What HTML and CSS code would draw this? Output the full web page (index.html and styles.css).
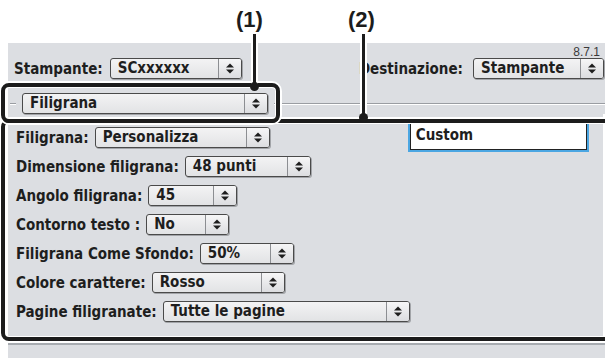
FILE: index.html
```html
<!DOCTYPE html>
<html lang="it">
<head>
    <meta charset="UTF-8">
    <meta name="viewport" content="width=device-width, initial-scale=1.0">
    <title>Filigrana</title>
    <link rel="stylesheet" href="styles.css">
</head>
<body>
    <div class="dialog">
        <div class="version">8.7.1</div>

        <!-- printer / destination -->
        <div class="top-row">
            <span class="label">Stampante:</span>
            <div class="popup pop-printer">
                <span class="popup-text">SCxxxxxx</span>
                <span class="popup-arrows"><svg width="8" height="11" viewBox="0 0 8 11"><polygon points="0,4.5 4,0.5 8,4.5"/><polygon points="0,6.5 8,6.5 4,10.5"/></svg></span>
            </div>
            <span class="label dest-label">Destinazione:</span>
            <div class="popup pop-dest">
                <span class="popup-text">Stampante</span>
                <span class="popup-arrows"><svg width="8" height="11" viewBox="0 0 8 11"><polygon points="0,4.5 4,0.5 8,4.5"/><polygon points="0,6.5 8,6.5 4,10.5"/></svg></span>
            </div>
        </div>

        <!-- panel selector -->
        <div class="section-head">
            <span class="rule rule-short"></span>
            <div class="popup pop-section">
                <span class="popup-text">Filigrana</span>
                <span class="popup-arrows"><svg width="8" height="11" viewBox="0 0 8 11"><polygon points="0,4.5 4,0.5 8,4.5"/><polygon points="0,6.5 8,6.5 4,10.5"/></svg></span>
            </div>
            <span class="rule rule-long"></span>
        </div>

        <div class="pane">
            <div class="fields">
                <div class="field-row">
                    <span class="label">Filigrana:</span>
                    <div class="popup pop-type">
                        <span class="popup-text">Personalizza</span>
                        <span class="popup-arrows"><svg width="8" height="11" viewBox="0 0 8 11"><polygon points="0,4.5 4,0.5 8,4.5"/><polygon points="0,6.5 8,6.5 4,10.5"/></svg></span>
                    </div>
                </div>
                <div class="field-row">
                    <span class="label">Dimensione filigrana:</span>
                    <div class="popup pop-size">
                        <span class="popup-text">48 punti</span>
                        <span class="popup-arrows"><svg width="8" height="11" viewBox="0 0 8 11"><polygon points="0,4.5 4,0.5 8,4.5"/><polygon points="0,6.5 8,6.5 4,10.5"/></svg></span>
                    </div>
                </div>
                <div class="field-row">
                    <span class="label">Angolo filigrana:</span>
                    <div class="popup pop-angle">
                        <span class="popup-text">45</span>
                        <span class="popup-arrows"><svg width="8" height="11" viewBox="0 0 8 11"><polygon points="0,4.5 4,0.5 8,4.5"/><polygon points="0,6.5 8,6.5 4,10.5"/></svg></span>
                    </div>
                </div>
                <div class="field-row">
                    <span class="label">Contorno testo :</span>
                    <div class="popup pop-outline">
                        <span class="popup-text">No</span>
                        <span class="popup-arrows"><svg width="8" height="11" viewBox="0 0 8 11"><polygon points="0,4.5 4,0.5 8,4.5"/><polygon points="0,6.5 8,6.5 4,10.5"/></svg></span>
                    </div>
                </div>
                <div class="field-row">
                    <span class="label">Filigrana Come Sfondo:</span>
                    <div class="popup pop-bg">
                        <span class="popup-text">50%</span>
                        <span class="popup-arrows"><svg width="8" height="11" viewBox="0 0 8 11"><polygon points="0,4.5 4,0.5 8,4.5"/><polygon points="0,6.5 8,6.5 4,10.5"/></svg></span>
                    </div>
                </div>
                <div class="field-row">
                    <span class="label">Colore carattere:</span>
                    <div class="popup pop-color">
                        <span class="popup-text">Rosso</span>
                        <span class="popup-arrows"><svg width="8" height="11" viewBox="0 0 8 11"><polygon points="0,4.5 4,0.5 8,4.5"/><polygon points="0,6.5 8,6.5 4,10.5"/></svg></span>
                    </div>
                </div>
                <div class="field-row">
                    <span class="label">Pagine filigranate:</span>
                    <div class="popup pop-pages">
                        <span class="popup-text">Tutte le pagine</span>
                        <span class="popup-arrows"><svg width="8" height="11" viewBox="0 0 8 11"><polygon points="0,4.5 4,0.5 8,4.5"/><polygon points="0,6.5 8,6.5 4,10.5"/></svg></span>
                    </div>
                </div>
            </div>
            <div class="text-box">Custom</div>
        </div>

        <div class="bottom-rule"></div>
    </div>

    <!-- manual callouts drawn over the dialog -->
    <div class="highlight highlight-2"></div>
    <div class="highlight highlight-1"></div>
    <span class="callout-label callout-label-1">(1)</span>
    <span class="callout-label callout-label-2">(2)</span>
    <span class="callout-line callout-line-1"></span>
    <span class="callout-line callout-line-2"></span>
    <span class="callout-dot callout-dot-1"></span>
    <span class="callout-dot callout-dot-2"></span>
</body>
</html>
```

FILE: styles.css
```css
body {
    margin: 0;
    padding: 0;
    width: 605px;
    height: 358px;
    position: relative;
    overflow: hidden;
    background-color: #fff;
    color: #1e1e1e;
    font-family: "DejaVu Sans Condensed", "DejaVu Sans", sans-serif;
    font-stretch: condensed;
    font-weight: bold;
    font-size: 15px;
}

.dialog {
    margin: 43px 0 0 8px;
    height: 315px;
    background-color: #dcdee2;
    display: flex;
    flex-direction: column;
}

.version {
    height: 12px;
    line-height: 12px;
    padding: 3px 5px 0 0;
    text-align: right;
    font-family: "Liberation Sans", Arial, sans-serif;
    font-stretch: normal;
    font-weight: normal;
    font-size: 12px;
    color: #3a3a3a;
}

.label {
    white-space: nowrap;
}

.top-row {
    display: flex;
    align-items: center;
    height: 21px;
    padding: 0 1px 0 6px;
}

.dest-label {
    margin-left: auto;
    margin-right: 3px;
}

/* popup menus */
.popup {
    display: flex;
    height: 21px;
    box-sizing: border-box;
    margin-left: 7px;
    border: 1px solid #4a4a4a;
    border-radius: 3px;
    background: linear-gradient(#f3f3f4, #e2e3e5);
    box-shadow: 1px 1px 0 #a2a4a8;
}

.popup-text {
    flex: 1;
    padding-left: 7px;
    line-height: 19px;
    white-space: nowrap;
    overflow: hidden;
}

.popup-arrows {
    width: 22px;
    display: flex;
    align-items: center;
    justify-content: center;
    border-left: 1px solid #8c8e92;
    border-radius: 0 2px 2px 0;
    background: linear-gradient(#f6f6f7, #dcdde0);
}

.popup-arrows svg {
    fill: #1e1e1e;
}

.pop-printer { width: 132px; }
.pop-dest { width: 131px; }
.pop-section { width: 246px; margin-left: 0; }
.pop-type { width: 175px; }
.pop-size { width: 126px; }
.pop-angle { width: 89px; }
.pop-outline { width: 83px; }
.pop-bg { width: 94px; }
.pop-color { width: 133px; }
.pop-pages { width: 247px; }

.section-head {
    display: flex;
    align-items: center;
    height: 21px;
    margin-top: 14px;
    padding-left: 2px;
}

.rule {
    height: 1px;
    background-color: #9a9da2;
    box-shadow: 0 1px 0 #fff;
}

.rule-short {
    width: 6px;
    margin-right: 6px;
}

.rule-long {
    flex: 1;
    margin-left: 6px;
}

.pane {
    flex: 1;
    display: flex;
    border-right: 2px solid #fff;
}

.fields {
    flex: 1;
    display: flex;
    flex-direction: column;
    gap: 8px;
    padding: 13px 0 0 8px;
}

.field-row {
    display: flex;
    align-items: center;
    height: 21px;
}

.field-row .popup {
    margin-left: 6px;
}

.text-box {
    width: 244px;
    height: 31px;
    box-sizing: border-box;
    margin: 5px 16px 0 0;
    padding: 6px 0 0 5px;
    line-height: 18px;
    background-color: #fff;
    border: 1px solid #222;
    box-shadow: 0 0 0 2px #4ba6e2;
}

.bottom-rule {
    height: 2px;
    margin-bottom: 13px;
    background-color: #a7abb0;
    box-shadow: 0 -2px 0 #f5f6f7;
}

/* callouts */
.highlight {
    position: absolute;
    box-sizing: border-box;
    border: 4px solid #1c1c1c;
    border-radius: 8px;
    box-shadow: 0 0 0 2px #fff, inset 0 0 0 1px #fff;
}

.highlight-1 {
    left: 1px;
    top: 83px;
    width: 279px;
    height: 40px;
}

.highlight-2 {
    left: 1px;
    top: 119px;
    width: 620px;
    height: 222px;
}

.callout-label {
    position: absolute;
    top: 7px;
    font-family: "Liberation Sans", Arial, sans-serif;
    font-stretch: normal;
    font-weight: bold;
    font-size: 22px;
    line-height: 26px;
    color: #1c1c1c;
}

.callout-label-1 { left: 236px; }
.callout-label-2 { left: 348px; }

.callout-line {
    position: absolute;
    top: 34px;
    width: 3px;
    background-color: #1c1c1c;
    box-shadow: 0 0 0 2px #fff;
}

.callout-line-1 {
    left: 253px;
    height: 51px;
}

.callout-line-2 {
    left: 362px;
    height: 81px;
}

.callout-dot {
    position: absolute;
    width: 9px;
    height: 9px;
    border-radius: 50%;
    background-color: #1c1c1c;
}

.callout-dot-1 {
    left: 250px;
    top: 82px;
}

.callout-dot-2 {
    left: 359px;
    top: 113px;
}
```
